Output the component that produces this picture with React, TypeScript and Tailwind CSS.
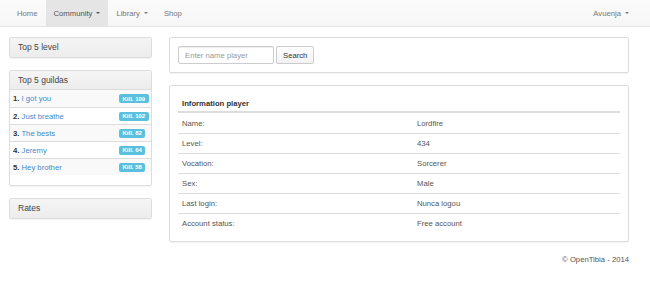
import React from "react";

const guilds = [
  { pos: 1, name: "I got you", kills: 109 },
  { pos: 2, name: "Just breathe", kills: 102 },
  { pos: 3, name: "The bests", kills: 82 },
  { pos: 4, name: "Jeremy", kills: 64 },
  { pos: 5, name: "Hey brother", kills: 58 },
];

const info = [
  { label: "Name:", value: "Lordfire" },
  { label: "Level:", value: "434" },
  { label: "Vocation:", value: "Sorcerer" },
  { label: "Sex:", value: "Male" },
  { label: "Last login:", value: "Nunca logou" },
  { label: "Account status:", value: "Free account" },
];

const Caret = () => (
  <span className="ml-[4px] inline-block h-0 w-0 border-x-[2.5px] border-t-[2.5px] border-x-transparent border-t-current align-middle" />
);

const NavLink = ({
  label,
  caret,
  active,
}: {
  label: string;
  caret?: boolean;
  active?: boolean;
}) => (
  <a
    className={
      active
        ? "flex h-full items-center bg-[#e5e5e5] px-[8px] text-[#555]"
        : "flex h-full items-center px-[8px] text-[#777]"
    }
  >
    {label}
    {caret && <Caret />}
  </a>
);

const PanelHeading = ({ title, last }: { title: string; last?: boolean }) => (
  <div
    className={
      "flex h-[19px] items-center bg-gradient-to-b from-[#f5f5f5] to-[#ececec] px-[8px] text-[8.5px] text-[#444] " +
      (last ? "" : "border-b border-[#ddd]")
    }
  >
    {title}
  </div>
);

export default function App() {
  return (
    <div
      className="min-h-[282px] w-[650px] bg-white text-[7.7px] leading-[11px] text-[#333]"
      style={{ fontFamily: '"Liberation Sans", Arial, sans-serif' }}
    >
      <nav className="flex h-[27px] items-stretch justify-between border-b border-[#e3e3e3] bg-gradient-to-b from-[#fbfbfb] to-[#f6f6f6] pl-[9px] pr-[13px]">
        <div className="flex h-[26px]">
          <NavLink label="Home" />
          <NavLink label="Community" caret active />
          <NavLink label="Library" caret />
          <NavLink label="Shop" />
        </div>
        <div className="flex h-[26px]">
          <NavLink label="Avuenja" caret />
        </div>
      </nav>

      <div className="flex gap-[17px] pl-[9px] pt-[10px]">
        <aside className="flex w-[143px] flex-col gap-[12px]">
          <div className="overflow-hidden rounded-[2px] border border-[#ddd] shadow-[0_1px_1px_rgba(0,0,0,0.05)]">
            <PanelHeading title="Top 5 level" last />
          </div>

          <div className="overflow-hidden rounded-[2px] border border-[#ddd] bg-white pb-[10px] shadow-[0_1px_1px_rgba(0,0,0,0.05)]">
            <PanelHeading title="Top 5 guildas" />
            {guilds.map((g, i) => (
              <div
                key={g.pos}
                className={
                  "grid h-[17px] grid-cols-[106px_1fr] items-center pl-[3px] " +
                  (i > 0 ? "border-t border-[#ddd] " : "") +
                  (i % 2 === 0 ? "bg-[#f9f9f9]" : "bg-white")
                }
              >
                <span className="whitespace-nowrap">
                  <b className="text-[#333]">{g.pos}.</b>{" "}
                  <a className="text-[#428bca]">{g.name}</a>
                </span>
                <span className="flex h-[9px] w-fit items-center whitespace-nowrap rounded-[2px] bg-[#5bc0de] px-[3.5px] text-[6px] font-bold leading-none text-white">
                  Kill. {g.kills}
                </span>
              </div>
            ))}
          </div>

          <div className="overflow-hidden rounded-[2px] border border-[#ddd] shadow-[0_1px_1px_rgba(0,0,0,0.05)]">
            <PanelHeading title="Rates" last />
          </div>
        </aside>

        <main className="flex w-[460px] flex-col">
          <div className="flex gap-[2px] rounded-[2px] border border-[#ddd] p-[8px] shadow-[0_1px_1px_rgba(0,0,0,0.05)]">
            <input
              className="h-[18px] w-[96px] rounded-[2px] border border-[#ccc] px-[6px] text-[7.7px] text-[#555] shadow-[inset_0_1px_1px_rgba(0,0,0,0.075)] outline-none placeholder:text-[#999]"
              placeholder="Enter name player"
            />
            <button className="h-[18px] rounded-[2px] border border-[#ccc] bg-gradient-to-b from-white to-[#f2f2f2] px-[6px] text-[7.7px] text-[#333]">
              Search
            </button>
          </div>

          <div className="mt-[12px] rounded-[2px] border border-[#ddd] px-[8px] pb-[8px] pt-[9px] shadow-[0_1px_1px_rgba(0,0,0,0.05)]">
            <div className="flex h-[18px] items-center border-b-2 border-[#ddd] px-[4px] font-bold text-[#333]">
              Information player
            </div>
            {info.map((row, i) => (
              <div
                key={row.label}
                className={
                  "grid h-[20px] grid-cols-[235px_1fr] items-center px-[4px] text-[#555] " +
                  (i > 0 ? "border-t border-[#ddd]" : "")
                }
              >
                <span>{row.label}</span>
                <span>{row.value}</span>
              </div>
            ))}
          </div>

          <footer className="mt-[12px] text-right text-[#555]">
            © OpenTibia - 2014
          </footer>
        </main>
      </div>
    </div>
  );
}
